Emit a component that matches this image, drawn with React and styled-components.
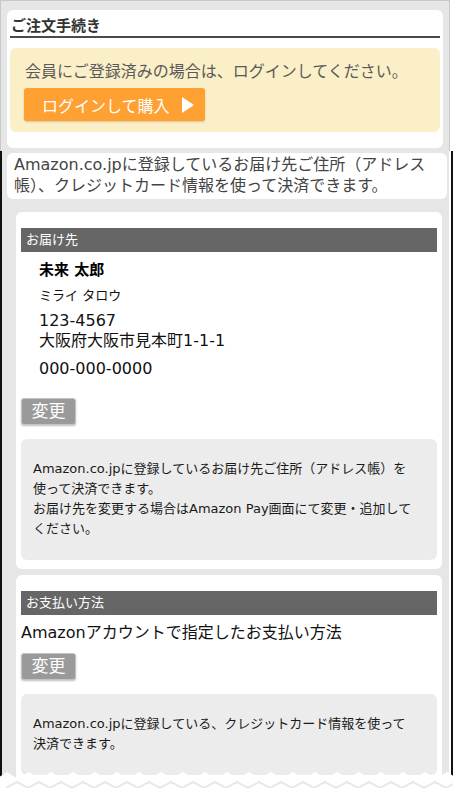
import React from 'react';
import styled, { createGlobalStyle } from 'styled-components';

const GlobalStyle = createGlobalStyle`
  body {
    margin: 0;
    background: #ffffff;
    font-family: "DejaVu Sans", "Noto Sans CJK JP", sans-serif;
    color: #222;
  }
`

const Screen = styled.div`
  position: relative;
  width: 453px;
  height: 788px;
  overflow: hidden;
`
const TopFrame = styled.div`
  width: 442px;
  background: #e6e6e6;
  border: 1px solid #c8c8c8;
  border-bottom: none;
  padding: 9px 0 3px 6px;
`
const OrderCard = styled.div`
  width: 430px;
  background: #fff;
  border-radius: 6px;
  padding: 6px 3px 16px 3px;
`
const PageTitle = styled.h1`
  margin: 0;
  padding: 0 1px;
  font-size: 15px;
  line-height: 20px;
  font-weight: bold;
  color: #333;
  border-bottom: 2px solid #4a4a4a;
`
const LoginBox = styled.div`
  margin-top: 10px;
  background: #fbefc8;
  border-radius: 6px;
  padding: 13px 10px 11px 15px;
`
const LoginText = styled.p`
  margin: 0;
  font-size: 16px;
  line-height: 22px;
  color: #5a5a5a;
`
const LoginButton = styled.button`
  display: flex;
  align-items: center;
  gap: 12px;
  margin: 5px 0 0 -1px;
  width: 181px;
  height: 33px;
  padding: 0 0 0 18px;
  border: none;
  border-radius: 3px;
  background: #ffa033;
  box-shadow: 0 1px 2px rgba(160, 110, 40, 0.35);
  color: #fff;
  font-family: inherit;
  font-size: 16px;
`
const Lower = styled.div`
  height: 640px;
  background: #e6e6e6;
  border-left: 2px solid #111;
  border-right: 2px solid #111;
  box-shadow: inset -2px 0 0 #fff;
  padding-top: 2px;
`
const Notice = styled.p`
  margin: 0 4px 0 5px;
  padding: 1px 20px 3px 7px;
  background: #fff;
  border-radius: 6px;
  font-size: 16px;
  line-height: 21px;
  color: #444;
`
const Card = styled.section`
  margin: ${p => p.$top}px 9px 0 14px;
  background: #fff;
  border-radius: 6px;
  padding: 16px 5px 9px 5px;
`
const BarTitle = styled.div`
  background: #666;
  color: #fff;
  font-size: 13px;
  line-height: 24px;
  height: 24px;
  padding-left: 5px;
`
const Address = styled.div`
  padding: 8px 0 0 18px;
  display: flex;
  flex-direction: column;
`
const Name = styled.div`
  font-size: 15px;
  line-height: 20px;
  font-weight: bold;
  color: #000;
`
const Kana = styled.div`
  margin-top: 6px;
  font-size: 13px;
  line-height: 20px;
  color: #111;
`
const Line = styled.div`
  margin-top: ${p => p.$gap || 0}px;
  font-size: 16px;
  line-height: 20px;
  color: #111;
`
const PayMethod = styled.div`
  margin-top: 7px;
  font-size: 16px;
  line-height: 22px;
  color: #111;
`
const ChangeButton = styled.button`
  display: block;
  margin-top: ${p => p.$top}px;
  width: 55px;
  height: 27px;
  padding: 0;
  background: #9a9a9a;
  border: 1px solid #c4c4c4;
  border-radius: 3px;
  box-shadow: 0 1px 2px rgba(0, 0, 0, 0.25);
  color: #fff;
  font-family: inherit;
  font-size: 17px;
  line-height: 25px;
`
const InfoBox = styled.div`
  margin-top: 14px;
  background: #ececec;
  border-radius: 6px;
  padding: 20px 22px 21px 12px;
  font-size: 13px;
  line-height: 20px;
  color: #1a1a1a;
`
const Tear = styled.svg`
  position: absolute;
  left: 0;
  bottom: 0;
  display: block;
`

function Triangle() {
  return (
    <svg width="12" height="16" viewBox="0 0 12 16">
      <path d="M0 0 L12 8 L0 16 Z" fill="#fff" />
    </svg>
  )
}

function TornEdge() {
  const teeth = []
  for (let x = -4; x < 470; x += 22) {
    teeth.push(`L${x + 11} 2 L${x + 22} 9`)
  }
  const faint = []
  for (let x = 6; x < 470; x += 22) {
    faint.push(`L${x + 11} 12 L${x + 22} 18`)
  }
  return (
    <Tear width="453" height="18" viewBox="0 0 453 18">
      <path d={`M-4 9 ${teeth.join(' ')} L470 18 L-4 18 Z`} fill="#fff" />
      <path d={`M6 18 ${faint.join(' ')}`} fill="none" stroke="#e9e9e9" strokeWidth="2" />
    </Tear>
  )
}

export default function App() {
  return (
    <>
      <GlobalStyle />
      <Screen>
        <TopFrame>
          <OrderCard>
            <PageTitle>ご注文手続き</PageTitle>
            <LoginBox>
              <LoginText>会員にご登録済みの場合は、ログインしてください。</LoginText>
              <LoginButton>
                ログインして購入
                <Triangle />
              </LoginButton>
            </LoginBox>
          </OrderCard>
        </TopFrame>

        <Lower>
          <Notice>
            Amazon.co.jpに登録しているお届け先ご住所（アドレス帳）、クレジットカード情報を使って決済できます。
          </Notice>

          <Card $top={13}>
            <BarTitle>お届け先</BarTitle>
            <Address>
              <Name>未来 太郎</Name>
              <Kana>ミライ タロウ</Kana>
              <Line $gap={5}>123-4567</Line>
              <Line>大阪府大阪市見本町1-1-1</Line>
              <Line $gap={8}>000-000-0000</Line>
            </Address>
            <ChangeButton $top={19}>変更</ChangeButton>
            <InfoBox>
              Amazon.co.jpに登録しているお届け先ご住所（アドレス帳）を使って決済できます。
              <br />
              お届け先を変更する場合はAmazon Pay画面にて変更・追加してください。
            </InfoBox>
          </Card>

          <Card $top={6}>
            <BarTitle>お支払い方法</BarTitle>
            <PayMethod>Amazonアカウントで指定したお支払い方法</PayMethod>
            <ChangeButton $top={9}>変更</ChangeButton>
            <InfoBox>
              Amazon.co.jpに登録している、クレジットカード情報を使って決済できます。
            </InfoBox>
          </Card>
        </Lower>
        <TornEdge />
      </Screen>
    </>
  );
}
